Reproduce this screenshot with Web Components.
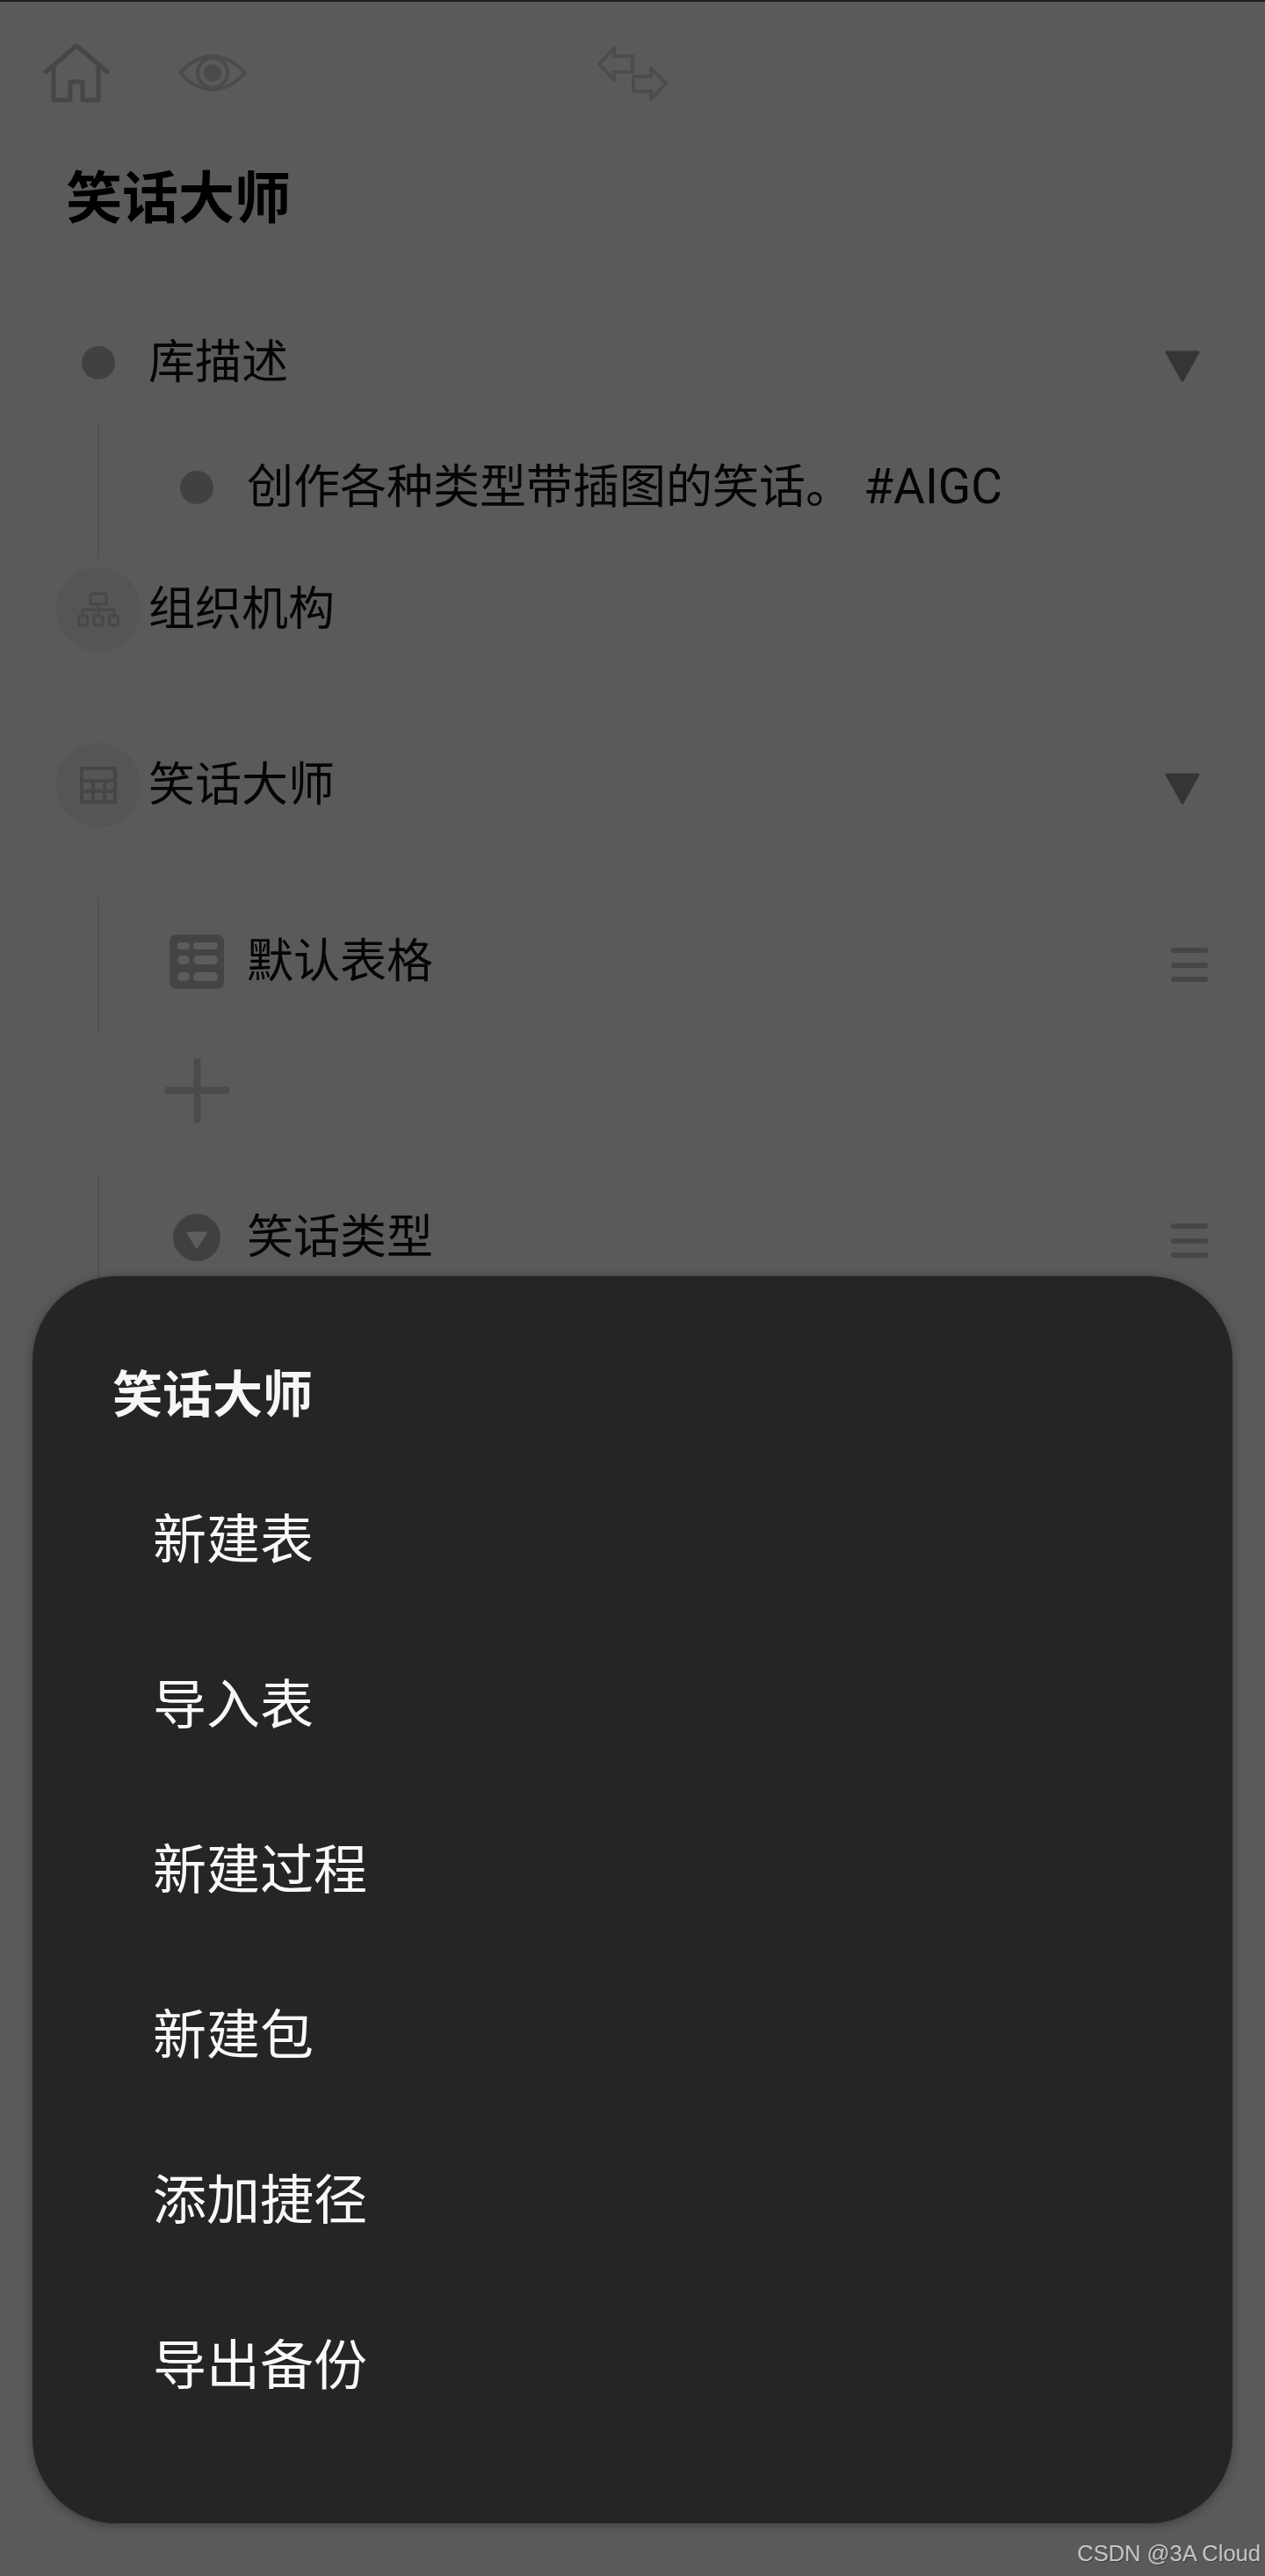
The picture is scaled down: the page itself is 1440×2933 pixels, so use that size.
<!DOCTYPE html>
<html lang="zh-CN">
<head>
<meta charset="utf-8">
<title>笑话大师</title>
<style>
  html, body { margin: 0; background: #5a5a5a; }
</style>
</head>
<body>
<app-screen>
  <app-toolbar>
    <app-icon name="home"></app-icon>
    <app-icon name="eye" style="margin-left:78px"></app-icon>
    <app-icon name="swap" style="margin:2px 0 0 399px"></app-icon>
  </app-toolbar>
  <page-title>笑话大师</page-title>

  <tree-row style="margin-top:77px;height:138px">
    <app-icon slot="icon" name="dot"></app-icon>
    库描述
    <app-icon slot="end" name="triangle" style="margin:8px 8px 0 0"></app-icon>
  </tree-row>
  <tree-branch style="height:153px">
    <tree-row style="height:145px">
      <app-icon slot="icon" name="dot"></app-icon>
      创作各种类型带插图的笑话。 <span style="font-size:55px">#AIGC</span>
    </tree-row>
  </tree-branch>
  <tree-row style="height:118px">
    <icon-badge slot="icon"><app-icon name="org"></app-icon></icon-badge>
    组织机构
  </tree-row>

  <tree-row style="margin-top:71px;height:140px">
    <icon-badge slot="icon"><app-icon name="table"></app-icon></icon-badge>
    笑话大师
    <app-icon slot="end" name="triangle" style="margin:8px 8px 0 0"></app-icon>
  </tree-row>
  <tree-branch style="margin-top:59px;height:154px">
    <tree-row style="height:144px">
      <app-icon slot="icon" name="rows"></app-icon>
      默认表格
      <app-icon slot="end" name="menu" style="margin-top:7px"></app-icon>
    </tree-row>
  </tree-branch>
  <tree-branch plain style="height:160px">
    <tree-row style="height:128px">
      <app-icon slot="icon" name="plus"></app-icon>
    </tree-row>
  </tree-branch>
  <tree-branch style="height:144px">
    <tree-row style="height:144px">
      <app-icon slot="icon" name="select"></app-icon>
      笑话类型
      <app-icon slot="end" name="menu" style="margin-top:7px"></app-icon>
    </tree-row>
  </tree-branch>

  <bottom-sheet heading="笑话大师">
    <sheet-item>新建表</sheet-item>
    <sheet-item>导入表</sheet-item>
    <sheet-item>新建过程</sheet-item>
    <sheet-item>新建包</sheet-item>
    <sheet-item>添加捷径</sheet-item>
    <sheet-item>导出备份</sheet-item>
  </bottom-sheet>

  <water-mark>CSDN @3A Cloud</water-mark>
</app-screen>

<script>
// fuente comun para los textos
var FUENTE = 'Roboto, "Noto Sans CJK SC", sans-serif';

// iconos de la app, cada uno con el tamaño medido en la captura
var ICONOS = {
  home: `<svg width="76" height="68" viewBox="0 0 76 68" fill="none" stroke="#454646" stroke-width="5" stroke-linejoin="round" stroke-linecap="round">
    <path d="M3 33 38 3 73 33"/><path d="M12 26V65H31V44H45V65H63V26"/></svg>`,
  eye: `<svg width="78" height="42" viewBox="0 0 78 42" fill="none" stroke="#4a4b4c" stroke-width="4">
    <path d="M2 21C14 8 26 2 39 2S64 8 76 21C64 34 52 40 39 40S14 34 2 21Z"/>
    <circle cx="39" cy="21" r="17"/><circle cx="39" cy="21" r="10" fill="#4a4b4c" stroke="none"/></svg>`,
  swap: `<svg width="80" height="62" viewBox="0 0 80 62" fill="none" stroke="#4c4c4c" stroke-width="4" stroke-linejoin="round">
    <path d="M2 20 19 2V11H40V29H19V38Z"/><path d="M78 42 61 25V34H41V51H61V60Z"/></svg>`,
  dot: `<svg width="38" height="38" viewBox="0 0 38 38"><circle cx="19" cy="19" r="19" fill="#404242"/></svg>`,
  triangle: `<svg width="42" height="36" viewBox="0 0 42 36"><path d="M3 2H39L21 34Z" fill="#343536" stroke="#343536" stroke-width="3" stroke-linejoin="round"/></svg>`,
  org: `<svg width="48" height="40" viewBox="0 0 48 40" fill="none" stroke="#484848" stroke-width="3">
    <rect x="15" y="2" width="18" height="12" rx="2"/><path d="M24 14V27M6 27V20H42V27"/>
    <rect x="1.5" y="27" width="10" height="11" rx="2.5"/><rect x="19" y="27" width="10" height="11" rx="2.5"/><rect x="36.5" y="27" width="10" height="11" rx="2.5"/></svg>`,
  table: `<svg width="42" height="42" viewBox="0 0 42 42" fill="none" stroke="#454646" stroke-width="4">
    <rect x="2" y="2" width="38" height="38"/><path d="M2 16H40M2 28H40M15 16V40M28 16V40"/></svg>`,
  rows: `<svg width="62" height="62" viewBox="0 0 62 62"><rect width="62" height="62" rx="8" fill="#444444"/>
    <g fill="#5c5c5c"><rect x="9" y="9" width="14" height="8" rx="4"/><rect x="27" y="9" width="28" height="8" rx="4"/>
    <rect x="9" y="24" width="14" height="10" rx="5"/><rect x="27" y="24" width="28" height="10" rx="5"/>
    <rect x="9" y="43" width="14" height="10" rx="5"/><rect x="27" y="43" width="28" height="10" rx="5"/></g></svg>`,
  menu: `<svg width="42" height="41" viewBox="0 0 42 41" fill="none" stroke="#454646" stroke-width="6" stroke-linecap="round">
    <path d="M3 4H39M3 21H39M3 37H39"/></svg>`,
  plus: `<svg width="73" height="73" viewBox="0 0 73 73" fill="none" stroke="#4a4b4b" stroke-width="8"><path d="M0 36.5H73M36.5 0V73"/></svg>`,
  select: `<svg width="54" height="54" viewBox="0 0 54 54"><circle cx="27" cy="27" r="27" fill="#3f4141"/>
    <path d="M17 22H37L27 38Z" fill="#5e5e5e" stroke="#5e5e5e" stroke-width="3" stroke-linejoin="round"/></svg>`
};

class AppIcon extends HTMLElement {
  constructor() {
    super();
    this.attachShadow({ mode: "open" });
  }
  connectedCallback() {
    this.shadowRoot.innerHTML = `<style>:host{display:block;line-height:0}</style>` + ICONOS[this.getAttribute("name")];
  }
}

// elemento sencillo: estilos + slot
function crearElemento(tag, html) {
  var plantilla = document.createElement("template");
  plantilla.innerHTML = html;
  customElements.define(tag, class extends HTMLElement {
    constructor() {
      super();
      this.attachShadow({ mode: "open" });
      this.shadowRoot.appendChild(plantilla.content.cloneNode(true));
    }
  });
}

crearElemento("app-screen", `
<style>
  :host{display:block;position:relative;box-sizing:border-box;height:2933px;overflow:hidden;
    background:#5a5a5a;border-top:2px solid #1c1c1c;font-family:${FUENTE};color:#000}
</style>
<slot></slot>`);

crearElemento("app-toolbar", `
<style>
  :host{display:flex;align-items:center;padding:47px 0 0 49px}
</style>
<slot></slot>`);

crearElemento("page-title", `
<style>
  :host{display:block;margin-top:70px;padding-left:75px;font-size:64px;line-height:80px;font-weight:700;color:#000}
</style>
<slot></slot>`);

crearElemento("tree-row", `
<style>
  :host{display:grid;grid-template-columns:96px 1fr auto;column-gap:9px;align-items:center;box-sizing:border-box;
    padding:0 65px 0 64px;font-size:53px;line-height:64px;color:#050505}
  .icono{display:flex;justify-content:center;align-items:center}
  .fin{display:flex;justify-content:flex-end}
</style>
<div class="icono"><slot name="icon"></slot></div>
<div class="texto"><slot></slot></div>
<div class="fin"><slot name="end"></slot></div>`);

crearElemento("tree-branch", `
<style>
  :host{display:block;margin-left:111px;box-sizing:border-box;border-left:2px solid #505050}
  :host([plain]){border-left-color:transparent}
  ::slotted(tree-row){padding-left:63px}
</style>
<slot></slot>`);

crearElemento("icon-badge", `
<style>
  :host{display:flex;justify-content:center;align-items:center;width:96px;height:96px;border-radius:50%;background:#555555}
</style>
<slot></slot>`);

crearElemento("sheet-item", `
<style>
  :host{display:flex;align-items:center;height:188px;padding-left:137px;font-size:61px;line-height:72px;color:#f8f8f8}
  span{margin-top:6px}
</style>
<span><slot></slot></span>`);

crearElemento("water-mark", `
<style>
  :host{position:absolute;right:5px;bottom:10px;font-family:"Liberation Sans",sans-serif;font-size:25.5px;line-height:32px;
    color:#c6c6c6;text-shadow:1px 1px 0 #3c3c3c}
</style>
<slot></slot>`);

class BottomSheet extends HTMLElement {
  constructor() {
    super();
    this.attachShadow({ mode: "open" });
  }
  connectedCallback() {
    this.shadowRoot.innerHTML = `
    <style>
      :host{position:absolute;left:37px;top:1451px;width:1366px;height:1420px;box-sizing:border-box;
        padding-top:96px;border-radius:96px;background:#252525;box-shadow:0 2px 12px rgba(0,0,0,.35);
        font-family:${FUENTE}}
      h2{margin:0 0 28px;padding-left:91px;font-size:57px;line-height:80px;font-weight:700;color:#f6f6f6}
    </style>
    <h2>${this.getAttribute("heading")}</h2>
    <slot></slot>`;
  }
}

customElements.define("app-icon", AppIcon);
customElements.define("bottom-sheet", BottomSheet);
</script>
</body>
</html>
